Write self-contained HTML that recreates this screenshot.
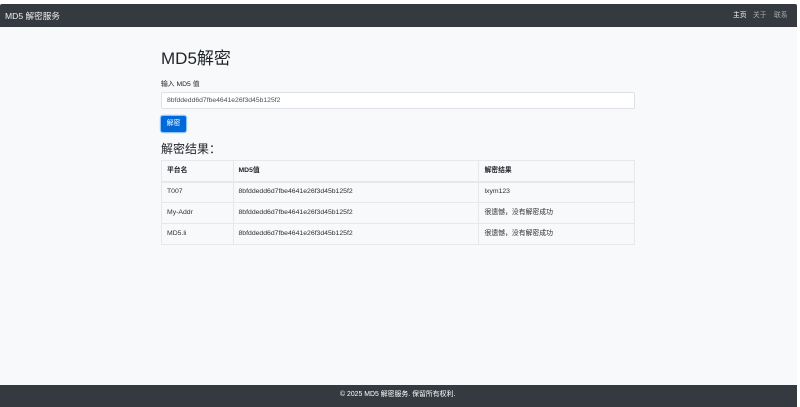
<!DOCTYPE html>
<html lang="zh-CN">
<head>
<meta charset="utf-8">
<title>MD5 解密服务</title>
<style>
*{box-sizing:border-box;margin:0;padding:0}
html,body{width:800px;height:407px;overflow:hidden;background:#fff}
body{position:relative;font-family:"Liberation Sans","Noto Sans CJK SC",sans-serif;color:#212529}
#wrap{left:0;top:0;width:800px;height:407px;filter:blur(.3px)}
div{position:absolute;white-space:nowrap}
.t{line-height:12px;height:12px}
#bg{left:0;top:4px;width:797px;height:403px;background:#f8f9fa}
#nav{left:0;top:4px;width:797px;height:23px;background:#343a40;border-radius:2px 2px 0 0}
#foot{left:0;top:385px;width:797px;height:22px;background:#343a40}
#tbl{left:161px;top:160px;width:474px;height:85px;border:1px solid #e6e8eb}
.h{height:1px;left:161px;width:474px;background:#e6e8eb}
.v{width:1px;top:160px;height:85px;background:#e6e8eb}
.c{font-size:6.85px;color:#2b3035}
.b{font-size:6.8px;font-weight:bold;color:#212529}
</style>
</head>
<body>
<div id="wrap">
<div id="bg"></div>
<div id="nav"></div>
<div class="t" style="left:5px;top:9.5px;font-size:8.6px;color:#f0f1f2">MD5 解密服务</div>
<div class="t" style="left:733px;top:9.5px;font-size:6.8px;color:#ffffff">主页</div>
<div class="t" style="left:753px;top:9.5px;font-size:6.8px;color:#a8abae">关于</div>
<div class="t" style="left:774px;top:9.5px;font-size:6.8px;color:#a8abae">联系</div>

<div style="left:161px;top:48px;font-size:17px;line-height:22px;color:#212529">MD5解密</div>
<div class="t" style="left:161px;top:79px;font-size:6.8px">输入 MD5 值</div>
<div style="left:161px;top:92px;width:474px;height:16.5px;background:#fff;border:1px solid #dee2e6;border-radius:2px"></div>
<div class="t" style="left:167px;top:95px;font-size:6.8px;color:#495057">8bfddedd6d7fbe4641e26f3d45b125f2</div>
<div style="left:161px;top:115.5px;width:25px;height:16.5px;background:#0069d9;border-radius:2px;box-shadow:0 0 0 1.2px rgba(38,143,255,.5)"></div>
<div class="t" style="left:161px;top:118px;width:25px;text-align:center;font-size:6.8px;color:#fff">解密</div>

<div style="left:161px;top:141px;font-size:12px;line-height:16px;color:#212529">解密结果：</div>

<div id="tbl"></div>
<div class="h" style="top:181px;height:1.5px"></div>
<div class="h" style="top:202px"></div>
<div class="h" style="top:223px"></div>
<div class="v" style="left:233px"></div>
<div class="v" style="left:478px"></div>

<div class="t b" style="left:167px;top:165px">平台名</div>
<div class="t b" style="left:238.5px;top:165px">MD5值</div>
<div class="t b" style="left:484.5px;top:165px">解密结果</div>

<div class="t c" style="left:167px;top:186px">T007</div>
<div class="t c" style="left:238.5px;top:186px">8bfddedd6d7fbe4641e26f3d45b125f2</div>
<div class="t c" style="left:484.5px;top:186px">lxym123</div>

<div class="t c" style="left:167px;top:207px">My-Addr</div>
<div class="t c" style="left:238.5px;top:207px">8bfddedd6d7fbe4641e26f3d45b125f2</div>
<div class="t c" style="left:484.5px;top:207px">很遗憾，没有解密成功</div>

<div class="t c" style="left:167px;top:228px">MD5.li</div>
<div class="t c" style="left:238.5px;top:228px">8bfddedd6d7fbe4641e26f3d45b125f2</div>
<div class="t c" style="left:484.5px;top:228px">很遗憾，没有解密成功</div>

<div id="foot"></div>
<div class="t" style="left:340px;top:388.5px;font-size:6.9px;color:#ffffff">© 2025 MD5 解密服务. 保留所有权利.</div>
</div>
</body>
</html>
